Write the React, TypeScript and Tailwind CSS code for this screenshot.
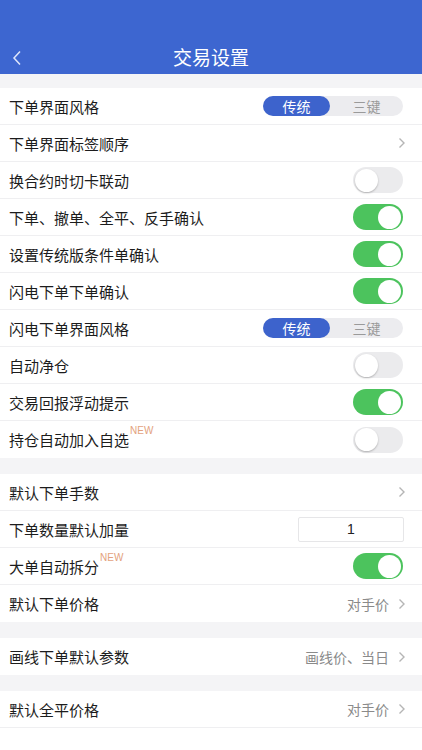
import React from "react";

const font = { fontFamily: '"Noto Sans CJK SC", "Noto Sans", sans-serif' };

function Toggle({ on }: { on: boolean }) {
  return on ? (
    <div className="w-[50px] h-[26px] rounded-full bg-[#4cc35d] flex items-center justify-end pr-[2px]">
      <div className="w-[23px] h-[23px] rounded-full bg-white" />
    </div>
  ) : (
    <div className="w-[50px] h-[26px] rounded-full bg-[#ebebed] flex items-center pl-[2px]">
      <div className="w-[23px] h-[23px] rounded-full bg-white shadow-[0_1px_2px_rgba(0,0,0,0.25)]" />
    </div>
  );
}

function Seg() {
  return (
    <div className="w-[140px] h-[20px] rounded-full bg-[#ececef] flex items-center text-[14px] leading-none">
      <div className="w-[67px] h-[20px] rounded-full bg-[#3d63cc] text-white flex items-center justify-center">传统</div>
      <div className="flex-1 flex items-center justify-center text-[#9a9a9a]">三键</div>
    </div>
  );
}

function Chevron() {
  return (
    <svg width="8" height="12" viewBox="0 0 8 12" className="ml-[9px]">
      <path d="M1.5 1.5 L6 6 L1.5 10.5" fill="none" stroke="#b5b5b5" strokeWidth="1.4" />
    </svg>
  );
}

function Row({ label, right, isNew, last }: { label: string; right: React.ReactNode; isNew?: boolean; last?: boolean }) {
  return (
    <div className={`h-[37px] flex items-center pl-[9px] pr-[19px] bg-white ${last ? "" : "border-b border-[#efeff1]"}`}>
      <div className="relative text-[15px] text-[#1c1c1c] leading-none">
        {label}
        {isNew && (
          <span className="absolute left-full top-[-6px] ml-[1px] text-[10px] text-[#e3a27e] leading-none" style={{ fontFamily: '"Liberation Sans", sans-serif' }}>NEW</span>
        )}
      </div>
      <div className="ml-auto flex items-center">{right}</div>
    </div>
  );
}

function Val({ text }: { text: string }) {
  return (
    <div className="flex items-center mr-[-3px]">
      <span className="text-[14px] text-[#8a8a8a] leading-none">{text}</span>
      <Chevron />
    </div>
  );
}

export default function App() {
  return (
    <div className="w-[422px] h-[750px] bg-white overflow-hidden" style={font}>
      <div className="h-[74px] bg-[#3d66d0] relative flex items-end">
        <div className="w-full h-[36px] flex items-center justify-center relative">
          <svg width="10" height="16" viewBox="0 0 10 16" className="absolute left-[12px] top-[12px]">
            <path d="M8 1.5 L2 8 L8 14.5" fill="none" stroke="#dfe6fa" strokeWidth="1.5" />
          </svg>
          <span className="text-[19px] text-white leading-none mt-[1px]">交易设置</span>
        </div>
      </div>
      <div className="bg-[#f4f4f6] pt-[14px]">
        <div>
          <Row label="下单界面风格" right={<Seg />} />
          <Row label="下单界面标签顺序" right={<div className="mr-[-3px]"><Chevron /></div>} />
          <Row label="换合约时切卡联动" right={<Toggle on={false} />} />
          <Row label="下单、撤单、全平、反手确认" right={<Toggle on />} />
          <Row label="设置传统版条件单确认" right={<Toggle on />} />
          <Row label="闪电下单下单确认" right={<Toggle on />} />
          <Row label="闪电下单界面风格" right={<Seg />} />
          <Row label="自动净仓" right={<Toggle on={false} />} />
          <Row label="交易回报浮动提示" right={<Toggle on />} />
          <Row label="持仓自动加入自选" isNew right={<Toggle on={false} />} last />
        </div>
        <div className="h-[16px]" />
        <div>
          <Row label="默认下单手数" right={<div className="mr-[-3px]"><Chevron /></div>} />
          <Row
            label="下单数量默认加量"
            right={
              <div className="w-[106px] h-[25px] border border-[#e6e6e8] rounded-[2px] flex items-center justify-center text-[14px] text-[#222] mr-[-1px]" style={{ fontFamily: '"Liberation Sans", sans-serif' }}>
                1
              </div>
            }
          />
          <Row label="大单自动拆分" isNew right={<Toggle on />} />
          <Row label="默认下单价格" right={<Val text="对手价" />} last />
        </div>
        <div className="h-[16px]" />
        <Row label="画线下单默认参数" right={<Val text="画线价、当日" />} last />
        <div className="h-[16px]" />
        <Row label="默认全平价格" right={<Val text="对手价" />} />
        <div className="h-[40px] bg-white" />
      </div>
    </div>
  );
}
